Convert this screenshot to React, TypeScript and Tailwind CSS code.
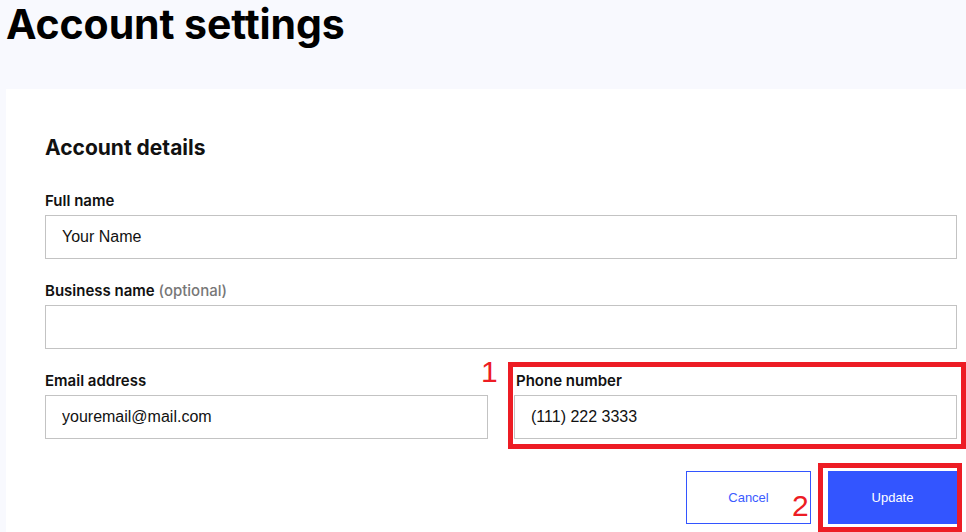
import React from 'react';

const labelCls = 'block text-[15px] font-semibold text-[#111] pt-[2px] mb-[5px] leading-[18px]';
const inputCls =
  'block w-full h-[44px] border border-[#c3c3c3] bg-white px-[16px] text-[16px] text-[#111] outline-none';
const inputFont = { fontFamily: '"Liberation Sans", Arial, sans-serif' };

const App: React.FC = () => {
  return (
    <div
      className="min-h-screen bg-[#f8f9fe] overflow-hidden"
      style={{ fontFamily: 'Inter, "Noto Sans", sans-serif' }}
    >
      <h1 className="h-[89px] pl-[6px] pt-[1px] text-[41px] font-bold leading-[46px] tracking-[-0.1px] text-black">
        Account settings
      </h1>

      <div className="ml-[6px] bg-white pl-[39px] pr-[9px] pt-[46px] pb-[10px]">
        <h2 className="text-[21px] font-bold leading-[26px] text-[#111] mb-[29px]">Account details</h2>

        <div className="mb-[21px]">
          <label className={labelCls}>Full name</label>
          <input className={inputCls} style={inputFont} defaultValue="Your Name" />
        </div>

        <div className="mb-[21px]">
          <label className={labelCls}>
            Business name <span className="font-medium text-[#777]">(optional)</span>
          </label>
          <input className={inputCls} style={inputFont} defaultValue="" />
        </div>

        <div className="grid grid-cols-2 gap-[26px]">
          <div>
            <label className={labelCls}>Email address</label>
            <input className={inputCls} style={inputFont} defaultValue="youremail@mail.com" />
          </div>
          <div className="relative">
            <label className={labelCls + ' pl-[2px]'}>Phone number</label>
            <input className={inputCls} style={inputFont} defaultValue="(111) 222 3333" />
            <div className="pointer-events-none absolute left-[-6px] top-[-8px] h-[87px] w-[458px] border-[5px] border-[#ed1c24]" />
            <span
              className="absolute left-[-33px] top-[-13px] text-[30px] leading-[30px] text-[#ed1c24]"
              style={{ fontFamily: '"Liberation Sans", Arial, sans-serif' }}
            >
              1
            </span>
          </div>
        </div>

        <div className="mt-[32px] flex justify-end gap-[17px]" style={inputFont}>
          <button className="h-[53px] w-[125px] border border-[#3355ff] bg-white text-[13px] text-[#3b5bff]">
            Cancel
          </button>
          <div className="relative">
            <button className="h-[53px] w-[129px] bg-[#3355ff] text-[13px] text-white">Update</button>
            <div className="pointer-events-none absolute left-[-10px] top-[-8px] h-[69px] w-[144px] border-[5px] border-[#ed1c24]" />
            <span className="absolute left-[-36px] top-[20px] text-[30px] leading-[30px] text-[#ed1c24]">2</span>
          </div>
        </div>
      </div>
    </div>
  );
};

export default App;
